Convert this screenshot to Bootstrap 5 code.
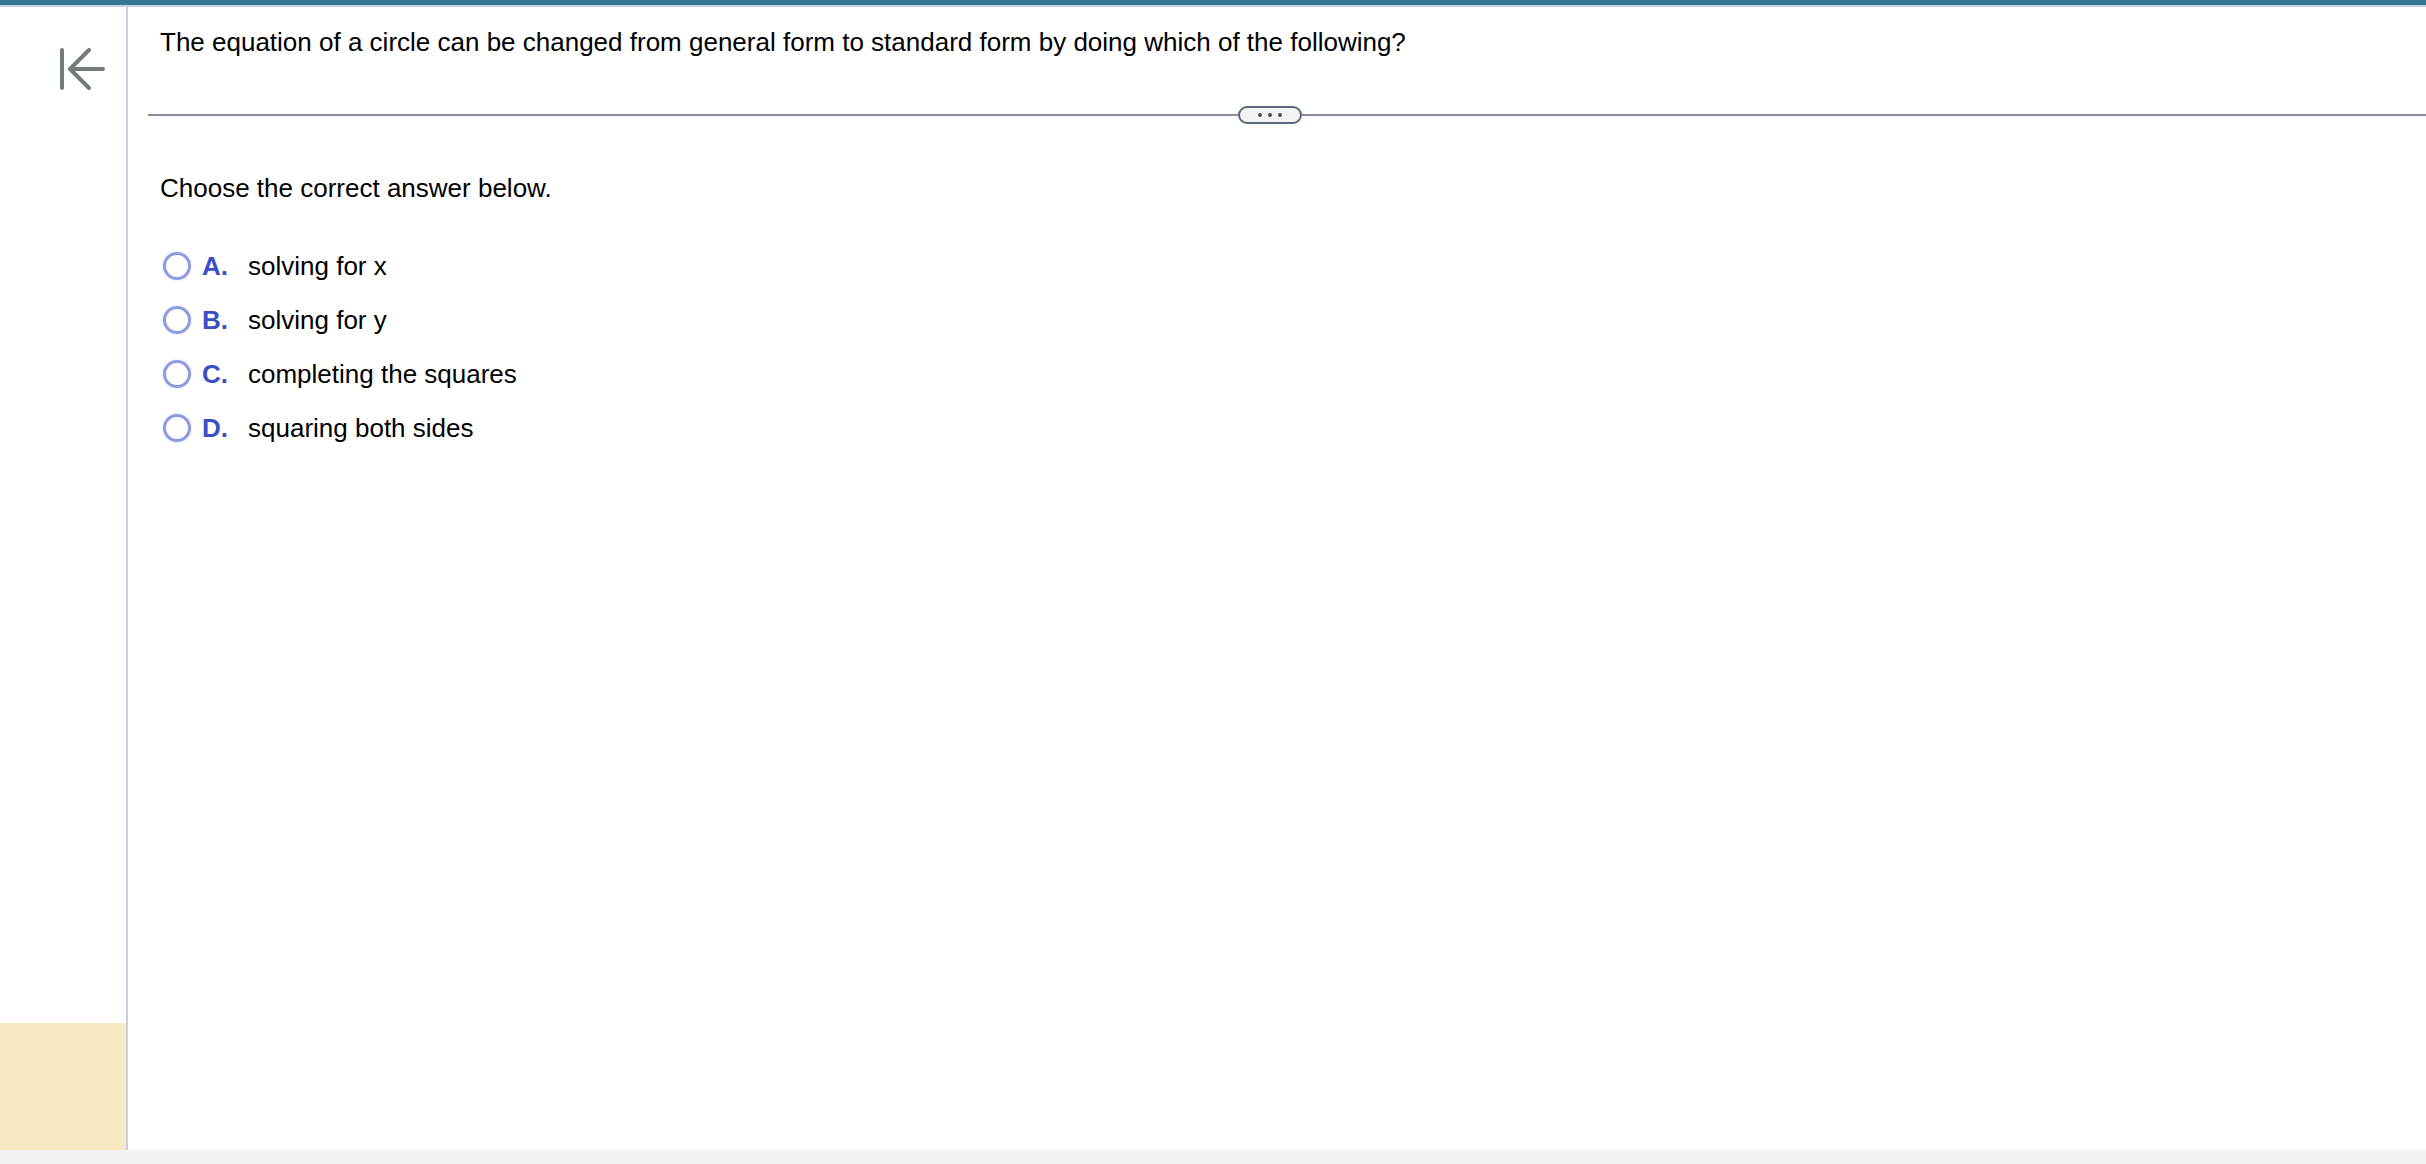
<!DOCTYPE html>
<html lang="en">
<head>
<meta charset="utf-8">
<title>Question</title>
<link href="https://cdn.jsdelivr.net/npm/bootstrap@5.3.0/dist/css/bootstrap.min.css" rel="stylesheet">
<style>
html, body { height: 100%; }
body { font-family: "Liberation Sans", Arial, sans-serif; font-size: 26px; color: #000; background: #f1f1f1; overflow: hidden; }
.shell { height: 1150px; background: #fff; border-top: 5px solid #337799; }
.topline { height: 2px; background: #c5d3e0; }
.main-row { height: 1143px; }
.side { width: 128px; border-right: 2px solid #c9cfdd; }
.side-icon { padding: 41px 0 0 54px; line-height: 0; }
.side-note { height: 127px; background: #f7eac3; }
.stem { padding: 17px 0 0 32px; line-height: 36px; height: 107px; }
.divider { margin-left: 20px; height: 2px; background: #868e9f; position: relative; }
.more-pill { position: absolute; left: 1090px; top: -8px; width: 64px; height: 18px; border: 2px solid #5b6877; border-radius: 9px; background: #f2f3f5; gap: 6px; }
.more-pill i { display: block; width: 4px; height: 4px; border-radius: 50%; background: #4a4f57; }
.prompt { padding: 54px 0 0 32px; line-height: 36px; }
.choices { padding: 33px 0 0 32px; }
.choice { height: 54px; }
.radio-ring { width: 28px; height: 28px; border: 3px solid #8d9be0; border-radius: 50%; margin-left: 3px; box-shadow: 0 0 2px #c5cdf0; }
.letter { color: #3b4fc4; font-weight: 700; width: 46px; margin-left: 11px; }
</style>
</head>
<body>
<div class="shell">
  <div class="topline"></div>
  <div class="d-flex main-row">
    <aside class="side d-flex flex-column justify-content-between flex-shrink-0">
      <div class="side-icon">
        <svg width="60" height="50" viewBox="0 0 60 50" fill="none" stroke="#737b7b" stroke-width="4" stroke-linecap="round" stroke-linejoin="round" aria-label="Collapse"><path d="M8 2V40M35 2L16 21L35 40M16 21H49"/></svg>
      </div>
      <div class="side-note"></div>
    </aside>
    <main class="flex-grow-1">
      <div class="stem">The equation of a circle can be changed from general form to standard form by doing which of the following?</div>
      <div class="divider"><div class="more-pill d-flex align-items-center justify-content-center"><i></i><i></i><i></i></div></div>
      <div class="prompt">Choose the correct answer below.</div>
      <div class="choices">
        <div class="choice d-flex align-items-center"><span class="radio-ring"></span><span class="letter">A.</span><span>solving for x</span></div>
        <div class="choice d-flex align-items-center"><span class="radio-ring"></span><span class="letter">B.</span><span>solving for y</span></div>
        <div class="choice d-flex align-items-center"><span class="radio-ring"></span><span class="letter">C.</span><span>completing the squares</span></div>
        <div class="choice d-flex align-items-center"><span class="radio-ring"></span><span class="letter">D.</span><span>squaring both sides</span></div>
      </div>
    </main>
  </div>
</div>
<script src="https://cdn.jsdelivr.net/npm/bootstrap@5.3.0/dist/js/bootstrap.bundle.min.js"></script>
</body>
</html>
